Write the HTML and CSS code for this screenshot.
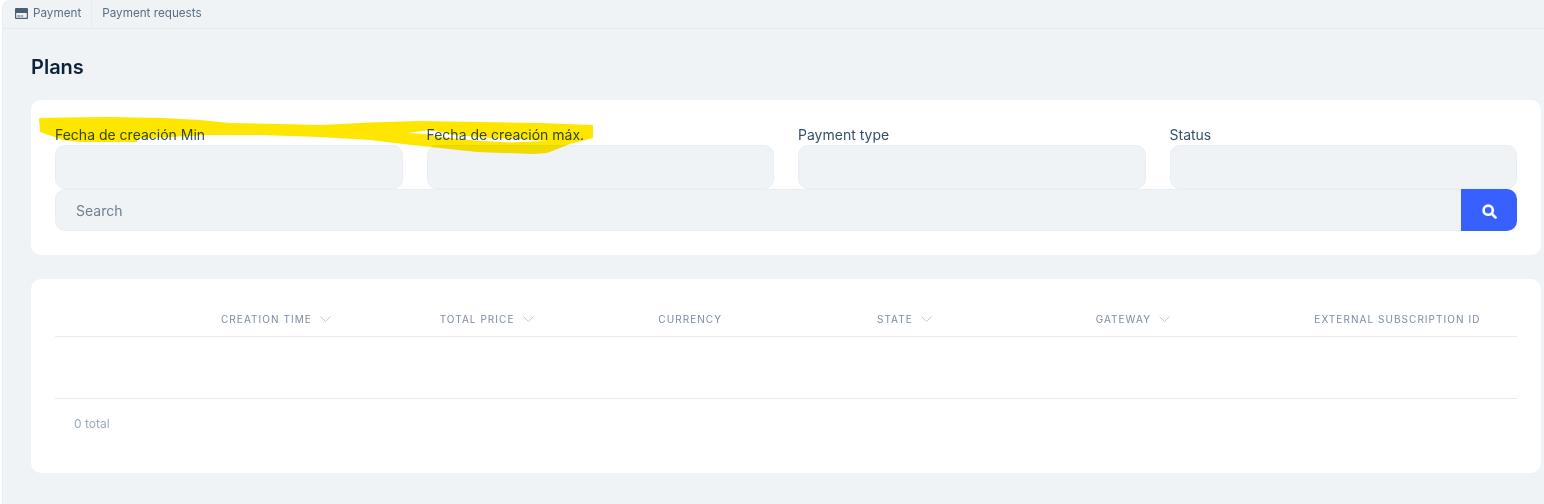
FILE: index.html
```html
<!DOCTYPE html>
<html lang="en">
<head>
<meta charset="utf-8">
<title>Plans</title>
<link rel="stylesheet" href="styles.css">
</head>
<body>
<div class="shell">
  <nav class="tabs">
    <a class="tab tab-first">
      <svg class="tab-icon" viewBox="0 0 13 11" width="13" height="11"><path fill="#4b5f73" fill-rule="evenodd" d="M1 0h11a1 1 0 0 1 1 1v9a1 1 0 0 1-1 1H1a1 1 0 0 1-1-1V1a1 1 0 0 1 1-1zm.2 5v4.800h10.600V5zm1 2.400h3.300v1.100H2.200zm4 0h2v1.100h-2z"/></svg>
      Payment
    </a>
    <a class="tab">Payment requests</a>
  </nav>
  <main class="content">
    <h1 class="title">Plans</h1>
    <section class="card filters">
      <div class="fields">
        <div class="field"><label>Fecha de creación Min</label><div class="input"></div></div>
        <div class="field"><label>Fecha de creación máx.</label><div class="input"></div></div>
        <div class="field"><label>Payment type</label><div class="input"></div></div>
        <div class="field"><label>Status</label><div class="input"></div></div>
      </div>
      <div class="search">
        <div class="search-input">Search</div>
        <button class="search-btn" type="button" aria-label="Search">
          <svg viewBox="0 0 14 14" width="15" height="15"><circle cx="5.800" cy="5.800" r="4.300" fill="none" stroke="#fff" stroke-width="2.400"/><path d="M9 9l3.600 3.600" stroke="#fff" stroke-width="2.400" stroke-linecap="round"/></svg>
        </button>
      </div>
    </section>
    <section class="card table-card">
      <div class="thead">
        <div></div>
        <div class="th">CREATION TIME<svg class="chev" viewBox="0 0 11 6" width="11" height="6"><path d="M.5.500l5 5 5-5" fill="none" stroke="#c3ccd6"/></svg></div>
        <div class="th">TOTAL PRICE<svg class="chev" viewBox="0 0 11 6" width="11" height="6"><path d="M.5.500l5 5 5-5" fill="none" stroke="#c3ccd6"/></svg></div>
        <div class="th">CURRENCY</div>
        <div class="th">STATE<svg class="chev" viewBox="0 0 11 6" width="11" height="6"><path d="M.5.500l5 5 5-5" fill="none" stroke="#c3ccd6"/></svg></div>
        <div class="th">GATEWAY<svg class="chev" viewBox="0 0 11 6" width="11" height="6"><path d="M.5.500l5 5 5-5" fill="none" stroke="#c3ccd6"/></svg></div>
        <div class="th">EXTERNAL SUBSCRIPTION ID</div>
      </div>
      <div class="tbody"></div>
      <div class="total">0 total</div>
    </section>
  </main>
  <svg class="scribble" viewBox="0 0 1544 504" width="1544" height="504">
    <path fill="#ffe600" fill-rule="evenodd" d="M39 118L63 117.500L110 117L163 118L200 120L230 123L280 124L320 125L370 122.500L420 121L480 122L540 123L593 125L593 138L570 144L547 153L533 154L477 152L403 144L370 140L320 137L260 135L207 135L170 137L137 138.500V142L80 142L63 140L40 132ZM407 133L430 130L455 135L490 138L520 139L547 141L510 142.500L475 140.500L440 137L425 134Z"/>
  </svg>
</div>
</body>
</html>
```

FILE: styles.css
```css
* { box-sizing: border-box; }
html, body { margin: 0; padding: 0; }
body { width: 1544px; height: 504px; overflow: hidden; background: #fff; font-family: Inter, "Liberation Sans", sans-serif; }
.shell { position: relative; width: 1542px; height: 504px; margin-left: 2px; background: #eff3f6; border-left: 1px solid #e8ecf6; border-top-left-radius: 8px; overflow: hidden; }
.tabs { display: flex; height: 29px; border-bottom: 1px solid #e6ebf1; font-size: 11.7px; color: #5a6f85; }
.tab { display: flex; align-items: center; padding: 0 10px; gap: 5px; height: 28px; padding-bottom: 2px; }
.tab-first { padding-left: 12px; border-right: 1px solid #e6ebf1; }
.tab-icon { flex: none; }
.content { padding: 0 0 0 28px; }
.title { margin: 0; padding-top: 24px; height: 71px; font-size: 20px; line-height: 28px; font-weight: 600; color: #0b2239; }
.card { width: 1510px; background: #fff; border-radius: 10px; padding: 0 24px; }
.filters { height: 155px; padding-top: 27px; }
.fields { display: grid; grid-template-columns: repeat(4, 1fr); column-gap: 24px; }
.field label { display: block; height: 18px; font-size: 14px; line-height: 16px; color: #35506b; }
.input { height: 44px; background: #eff3f6; border: 1px solid #e9edf5; border-radius: 10px; }
.search { display: flex; height: 42px; }
.search-input { flex: 1; display: flex; align-items: center; padding-left: 20px; background: #eff3f6; border: 1px solid #e9edf5; border-right: 0; border-radius: 10px 0 0 10px; font-size: 14px; color: #6f8092; }
.search-btn { width: 56px; border: 0; padding: 2px 0 0; display: flex; align-items: center; justify-content: center; background: #3860ff; border-radius: 0 10px 10px 0; }
.table-card { height: 194px; margin-top: 24px; padding-top: 24px; }
.thead { display: grid; grid-template-columns: 150px repeat(6, 1fr); height: 34px; border-bottom: 1px solid #e6ebf1; }
.th { display: flex; align-items: center; gap: 8px; padding-left: 16px; height: 31px; font-size: 10px; letter-spacing: 1.05px; color: #7b8ca0; white-space: nowrap; }
.chev { flex: none; }
.tbody { height: 62px; border-bottom: 1px solid #e6ebf1; }
.total { padding: 17px 0 0 19px; font-size: 12px; line-height: 16px; color: #9aaabb; }
.scribble { position: absolute; left: -3px; top: 0; pointer-events: none; mix-blend-mode: multiply; }
```
